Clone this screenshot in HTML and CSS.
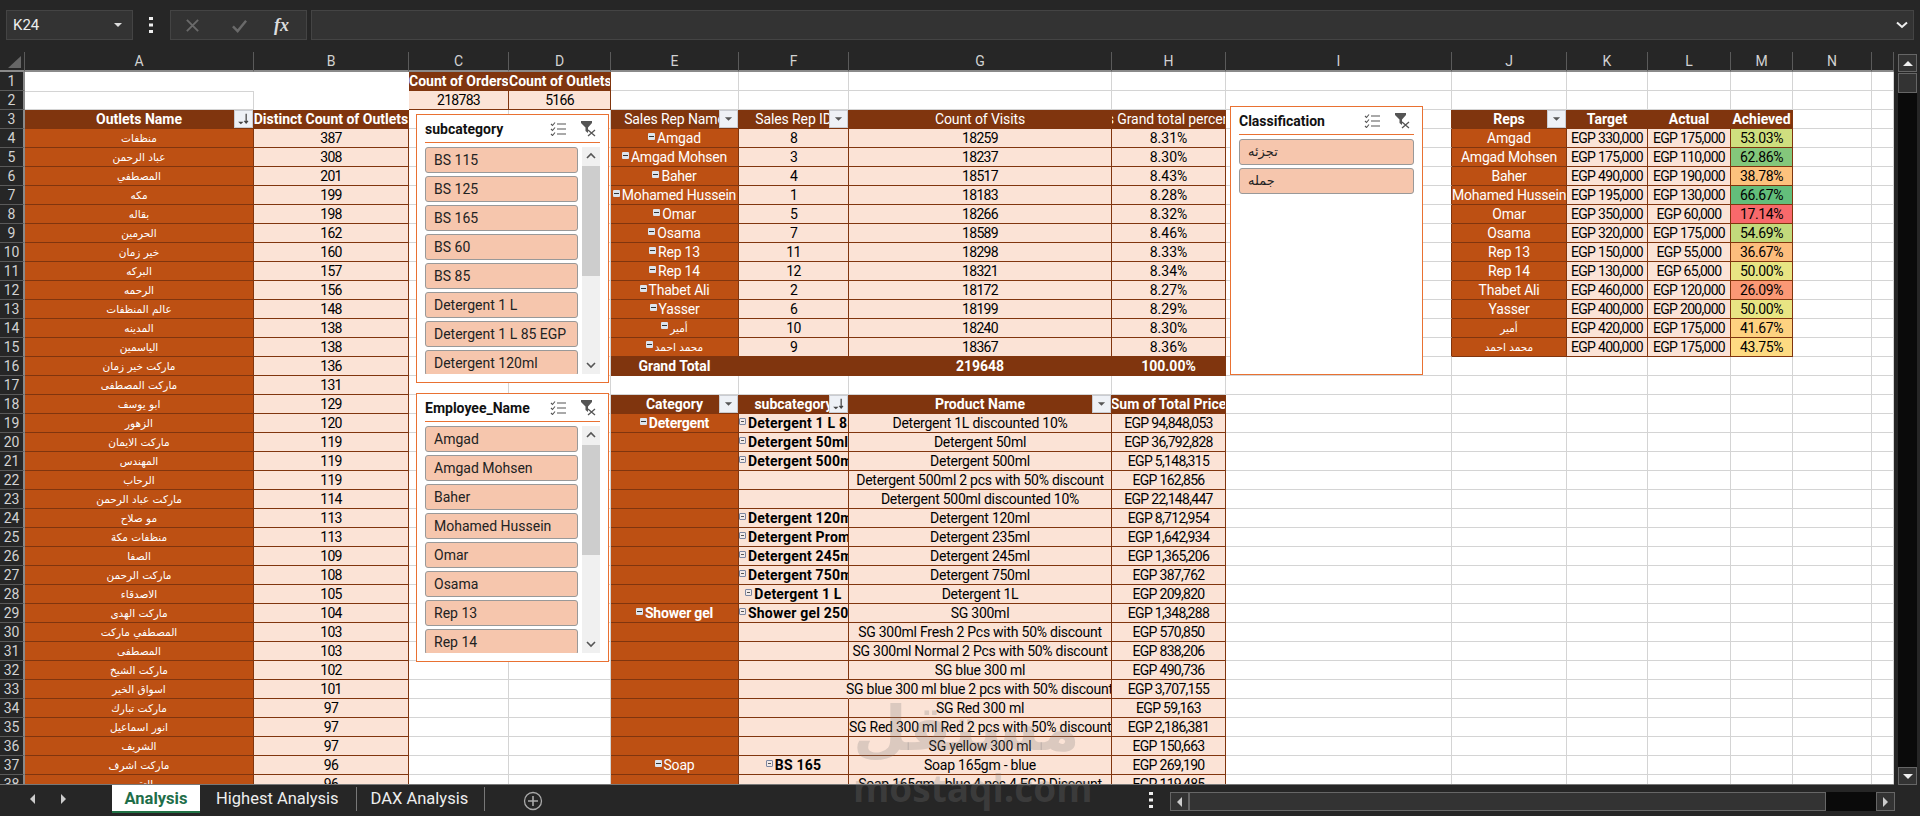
FILE: index.html
```html
<!DOCTYPE html>
<html lang="en">
<head>
<meta charset="utf-8">
<title>Analysis</title>
<link rel="stylesheet" href="styles.css">
</head>
<body>
<svg class="defs" width="0" height="0" aria-hidden="true">
  <symbol id="down" viewBox="0 0 18 18"><path d="M5 7h8l-4 4z" fill="#555"/></symbol>
  <symbol id="sort" viewBox="0 0 18 18"><path d="M3 12h6l-3 3z" fill="#444"/><path d="M12 3v10M10 11l2 2.5 2-2.5" stroke="#444" stroke-width="1.4" fill="none"/></symbol>
  <symbol id="check" viewBox="0 0 16 14"><path d="M1 2l1.5 1.5L5 .5M1 7l1.5 1.5L5 5.5M1 12l1.5 1.5L5 10.5" fill="none" stroke="#555" stroke-width="1.1"/><path d="M7 2h9M7 7h9M7 12h9" stroke="#555" stroke-width="1.1"/></symbol>
  <symbol id="clear" viewBox="0 0 16 16"><path d="M0 0h11v2L7 6.5V12L4.5 10V6.5L0 2z" fill="#555"/><path d="M7 9l7 6M14 9l-7 6" stroke="#555" stroke-width="1.3"/></symbol>
  <symbol id="up" viewBox="0 0 18 18"><path d="M5 11l4-4 4 4" fill="none" stroke="#555" stroke-width="1.6"/></symbol>
  <symbol id="dn" viewBox="0 0 18 18"><path d="M5 7l4 4 4-4" fill="none" stroke="#555" stroke-width="1.6"/></symbol>
  <symbol id="dots" viewBox="0 0 4 16"><path d="M0 0h4v3H0zM0 6.500h4v3H0zM0 13h4v3H0z" fill="#eee"/></symbol>
</svg>

<header class="formula">
  <div class="namebox"><span>K24</span><i class="tri"></i></div>
  <svg class="dots"><use href="#dots"/></svg>
  <div class="fxbox">
    <svg class="fxic" viewBox="0 0 16 16"><path d="M2 2l12 12M14 2L2 14" stroke="#6a6a6a" stroke-width="2"/></svg>
    <svg class="fxic" viewBox="0 0 16 16"><path d="M1 9l5 5L15 3" fill="none" stroke="#6a6a6a" stroke-width="2.600"/></svg>
    <span class="fx">fx</span>
  </div>
  <div class="input"><svg class="chev" viewBox="0 0 12 8"><path d="M1 1.500l5 4.500 5-4.500" fill="none" stroke="#eee" stroke-width="2"/></svg></div>
</header>

<main class="sheet">
  <div class="gridwrap">
    <table class="grid">
      <colgroup>
        <col class="c0"><col class="ca"><col class="cb"><col class="cc"><col class="cd"><col class="ce"><col class="cf"><col class="cg"><col class="ch"><col class="ci"><col class="cj"><col class="ck"><col class="cl"><col class="cm"><col class="cn"><col class="co">
      </colgroup>
      <thead>
        <tr><th class="corner"><i></i></th><th>A</th><th>B</th><th>C</th><th>D</th><th>E</th><th>F</th><th>G</th><th>H</th><th>I</th><th>J</th><th>K</th><th>L</th><th>M</th><th>N</th><th></th></tr>
      </thead>
      <tbody>
        <tr><th>1</th><td class="x"></td><td class="xb"></td><td class="h">Count of Orders</td><td class="h">Count of Outlets</td><td></td><td></td><td></td><td></td><td></td><td></td><td></td><td></td><td></td><td></td><td></td></tr>
        <tr><th>2</th><td class="a2"></td><td class="xb"></td><td class="l n">218783</td><td class="l n">5166</td><td></td><td></td><td></td><td></td><td></td><td></td><td></td><td></td><td></td><td></td><td></td></tr>
        <tr><th>3</th><td class="h rel">Outlets Name<span class="fb"><svg><use href="#sort"/></svg></span></td><td class="h"><span class="wide">Distinct Count of Outlets</span></td><td></td><td></td><td class="h reg rel"><span class="wide">Sales Rep Name</span><span class="fb"><svg><use href="#down"/></svg></span></td><td class="h reg rel">Sales Rep ID<span class="fb"><svg><use href="#down"/></svg></span></td><td class="h reg">Count of Visits</td><td class="h reg"><span class="wide">Visits Grand total percentage</span></td><td class="ib"></td><td class="h rel">Reps<span class="fb"><svg><use href="#down"/></svg></span></td><td class="h">Target</td><td class="h">Actual</td><td class="h">Achieved</td><td></td><td></td></tr>
        <tr><th>4</th><td class="o ar">منظفات</td><td class="l n">387</td><td></td><td></td><td class="o"><i class="m"></i>Amgad</td><td class="l n">8</td><td class="l n">18259</td><td class="l">8.31%</td><td class="ib"></td><td class="o">Amgad</td><td class="l n">EGP 330,000</td><td class="l n">EGP 175,000</td><td class="l p s1">53.03%</td><td></td><td></td></tr>
        <tr><th>5</th><td class="o ar">عباد الرحمن</td><td class="l n">308</td><td></td><td></td><td class="o"><i class="m"></i>Amgad Mohsen</td><td class="l n">3</td><td class="l n">18237</td><td class="l">8.30%</td><td class="ib"></td><td class="o">Amgad Mohsen</td><td class="l n">EGP 175,000</td><td class="l n">EGP 110,000</td><td class="l p s2">62.86%</td><td></td><td></td></tr>
        <tr><th>6</th><td class="o ar">المصطفي</td><td class="l n">201</td><td></td><td></td><td class="o"><i class="m"></i>Baher</td><td class="l n">4</td><td class="l n">18517</td><td class="l">8.43%</td><td class="ib"></td><td class="o">Baher</td><td class="l n">EGP 490,000</td><td class="l n">EGP 190,000</td><td class="l p s3">38.78%</td><td></td><td></td></tr>
        <tr><th>7</th><td class="o ar">مكه</td><td class="l n">199</td><td></td><td></td><td class="o"><i class="m"></i>Mohamed Hussein</td><td class="l n">1</td><td class="l n">18183</td><td class="l">8.28%</td><td class="ib"></td><td class="o">Mohamed Hussein</td><td class="l n">EGP 195,000</td><td class="l n">EGP 130,000</td><td class="l p s4">66.67%</td><td></td><td></td></tr>
        <tr><th>8</th><td class="o ar">بقاله</td><td class="l n">198</td><td></td><td></td><td class="o"><i class="m"></i>Omar</td><td class="l n">5</td><td class="l n">18266</td><td class="l">8.32%</td><td class="ib"></td><td class="o">Omar</td><td class="l n">EGP 350,000</td><td class="l n">EGP 60,000</td><td class="l p s5">17.14%</td><td></td><td></td></tr>
        <tr><th>9</th><td class="o ar">الحرمين</td><td class="l n">162</td><td></td><td></td><td class="o"><i class="m"></i>Osama</td><td class="l n">7</td><td class="l n">18589</td><td class="l">8.46%</td><td class="ib"></td><td class="o">Osama</td><td class="l n">EGP 320,000</td><td class="l n">EGP 175,000</td><td class="l p s6">54.69%</td><td></td><td></td></tr>
        <tr><th>10</th><td class="o ar">خير زمان</td><td class="l n">160</td><td></td><td></td><td class="o"><i class="m"></i>Rep 13</td><td class="l n">11</td><td class="l n">18298</td><td class="l">8.33%</td><td class="ib"></td><td class="o">Rep 13</td><td class="l n">EGP 150,000</td><td class="l n">EGP 55,000</td><td class="l p s7">36.67%</td><td></td><td></td></tr>
        <tr><th>11</th><td class="o ar">البركه</td><td class="l n">157</td><td></td><td></td><td class="o"><i class="m"></i>Rep 14</td><td class="l n">12</td><td class="l n">18321</td><td class="l">8.34%</td><td class="ib"></td><td class="o">Rep 14</td><td class="l n">EGP 130,000</td><td class="l n">EGP 65,000</td><td class="l p s8">50.00%</td><td></td><td></td></tr>
        <tr><th>12</th><td class="o ar">الرحمه</td><td class="l n">156</td><td></td><td></td><td class="o"><i class="m"></i>Thabet Ali</td><td class="l n">2</td><td class="l n">18172</td><td class="l">8.27%</td><td class="ib"></td><td class="o">Thabet Ali</td><td class="l n">EGP 460,000</td><td class="l n">EGP 120,000</td><td class="l p s9">26.09%</td><td></td><td></td></tr>
        <tr><th>13</th><td class="o ar">عالم المنظفات</td><td class="l n">148</td><td></td><td></td><td class="o"><i class="m"></i>Yasser</td><td class="l n">6</td><td class="l n">18199</td><td class="l">8.29%</td><td class="ib"></td><td class="o">Yasser</td><td class="l n">EGP 400,000</td><td class="l n">EGP 200,000</td><td class="l p s8">50.00%</td><td></td><td></td></tr>
        <tr><th>14</th><td class="o ar">المدينه</td><td class="l n">138</td><td></td><td></td><td class="o ar"><i class="m"></i>أمير</td><td class="l n">10</td><td class="l n">18240</td><td class="l">8.30%</td><td class="ib"></td><td class="o ar">أمير</td><td class="l n">EGP 420,000</td><td class="l n">EGP 175,000</td><td class="l p s10">41.67%</td><td></td><td></td></tr>
        <tr><th>15</th><td class="o ar">الياسمين</td><td class="l n">138</td><td></td><td></td><td class="o ar"><i class="m"></i>محمد احمد</td><td class="l n">9</td><td class="l n">18367</td><td class="l">8.36%</td><td class="ib"></td><td class="o ar">محمد احمد</td><td class="l n">EGP 400,000</td><td class="l n">EGP 175,000</td><td class="l p s11">43.75%</td><td></td><td></td></tr>
        <tr><th>16</th><td class="o ar">ماركت خير زمان</td><td class="l n">136</td><td></td><td></td><td class="h gt">Grand Total</td><td class="h gt"></td><td class="h gt">219648</td><td class="h gt">100.00%</td><td></td><td></td><td></td><td></td><td></td><td></td><td></td></tr>
        <tr><th>17</th><td class="o ar">ماركت المصطفى</td><td class="l n">131</td><td></td><td></td><td></td><td></td><td></td><td></td><td></td><td></td><td></td><td></td><td></td><td></td><td></td></tr>
        <tr><th>18</th><td class="o ar">ابو يوسف</td><td class="l n">129</td><td></td><td></td><td class="h rel">Category<span class="fb"><svg><use href="#down"/></svg></span></td><td class="h rel">subcategory<span class="fb"><svg><use href="#sort"/></svg></span></td><td class="h rel">Product Name<span class="fb"><svg><use href="#down"/></svg></span></td><td class="h"><span class="wide">Sum of Total Price</span></td><td></td><td></td><td></td><td></td><td></td><td></td><td></td></tr>
        <tr><th>19</th><td class="o ar">الزهور</td><td class="l n">120</td><td></td><td></td><td class="o bd"><i class="m"></i>Detergent</td><td class="l bd"><i class="m o2"></i>Detergent 1 L 85 EGP</td><td class="l t">Detergent 1L discounted 10%</td><td class="l n">EGP 94,848,053</td><td></td><td></td><td></td><td></td><td></td><td></td><td></td></tr>
        <tr><th>20</th><td class="o ar">ماركت الايمان</td><td class="l n">119</td><td></td><td></td><td class="o"></td><td class="l bd"><i class="m o2"></i>Detergent 50ml</td><td class="l t">Detergent 50ml</td><td class="l n">EGP 36,792,828</td><td></td><td></td><td></td><td></td><td></td><td></td><td></td></tr>
        <tr><th>21</th><td class="o ar">المهندس</td><td class="l n">119</td><td></td><td></td><td class="o"></td><td class="l bd"><i class="m o2"></i>Detergent 500ml</td><td class="l t">Detergent 500ml</td><td class="l n">EGP 5,148,315</td><td></td><td></td><td></td><td></td><td></td><td></td><td></td></tr>
        <tr><th>22</th><td class="o ar">الرحاب</td><td class="l n">119</td><td></td><td></td><td class="o"></td><td class="l"></td><td class="l t">Detergent 500ml 2 pcs with 50% discount</td><td class="l n">EGP 162,856</td><td></td><td></td><td></td><td></td><td></td><td></td><td></td></tr>
        <tr><th>23</th><td class="o ar">ماركت عباد الرحمن</td><td class="l n">114</td><td></td><td></td><td class="o"></td><td class="l"></td><td class="l t">Detergent 500ml discounted 10%</td><td class="l n">EGP 22,148,447</td><td></td><td></td><td></td><td></td><td></td><td></td><td></td></tr>
        <tr><th>24</th><td class="o ar">مو صلاح</td><td class="l n">113</td><td></td><td></td><td class="o"></td><td class="l bd"><i class="m o2"></i>Detergent 120ml</td><td class="l t">Detergent 120ml</td><td class="l n">EGP 8,712,954</td><td></td><td></td><td></td><td></td><td></td><td></td><td></td></tr>
        <tr><th>25</th><td class="o ar">منظفات مكة</td><td class="l n">113</td><td></td><td></td><td class="o"></td><td class="l bd"><i class="m o2"></i>Detergent Promo</td><td class="l t">Detergent 235ml</td><td class="l n">EGP 1,642,934</td><td></td><td></td><td></td><td></td><td></td><td></td><td></td></tr>
        <tr><th>26</th><td class="o ar">الصفا</td><td class="l n">109</td><td></td><td></td><td class="o"></td><td class="l bd"><i class="m o2"></i>Detergent 245ml</td><td class="l t">Detergent 245ml</td><td class="l n">EGP 1,365,206</td><td></td><td></td><td></td><td></td><td></td><td></td><td></td></tr>
        <tr><th>27</th><td class="o ar">ماركت الرحمن</td><td class="l n">108</td><td></td><td></td><td class="o"></td><td class="l bd"><i class="m o2"></i>Detergent 750ml</td><td class="l t">Detergent 750ml</td><td class="l n">EGP 387,762</td><td></td><td></td><td></td><td></td><td></td><td></td><td></td></tr>
        <tr><th>28</th><td class="o ar">الاصدقاء</td><td class="l n">105</td><td></td><td></td><td class="o"></td><td class="l bd"><i class="m o2"></i>Detergent 1 L</td><td class="l t">Detergent 1L</td><td class="l n">EGP 209,820</td><td></td><td></td><td></td><td></td><td></td><td></td><td></td></tr>
        <tr><th>29</th><td class="o ar">ماركت الهدى</td><td class="l n">104</td><td></td><td></td><td class="o bd"><i class="m"></i>Shower gel</td><td class="l bd"><i class="m o2"></i>Shower gel 250ml</td><td class="l t">SG 300ml</td><td class="l n">EGP 1,348,288</td><td></td><td></td><td></td><td></td><td></td><td></td><td></td></tr>
        <tr><th>30</th><td class="o ar">المصطفي ماركت</td><td class="l n">103</td><td></td><td></td><td class="o"></td><td class="l"></td><td class="l t">SG 300ml Fresh 2 Pcs with 50% discount</td><td class="l n">EGP 570,850</td><td></td><td></td><td></td><td></td><td></td><td></td><td></td></tr>
        <tr><th>31</th><td class="o ar">المصطفى</td><td class="l n">103</td><td></td><td></td><td class="o"></td><td class="l"></td><td class="l t">SG 300ml Normal 2 Pcs with 50% discount</td><td class="l n">EGP 838,206</td><td></td><td></td><td></td><td></td><td></td><td></td><td></td></tr>
        <tr><th>32</th><td class="o ar">ماركت الشيخ</td><td class="l n">102</td><td></td><td></td><td class="o"></td><td class="l"></td><td class="l t">SG blue 300 ml</td><td class="l n">EGP 490,736</td><td></td><td></td><td></td><td></td><td></td><td></td><td></td></tr>
        <tr><th>33</th><td class="o ar">اسواق الخير</td><td class="l n">101</td><td></td><td></td><td class="o"></td><td class="l nr"></td><td class="l t spill"><span>SG blue 300 ml blue 2 pcs with 50% discount</span></td><td class="l n">EGP 3,707,155</td><td></td><td></td><td></td><td></td><td></td><td></td><td></td></tr>
        <tr><th>34</th><td class="o ar">ماركت تبارك</td><td class="l n">97</td><td></td><td></td><td class="o"></td><td class="l"></td><td class="l t">SG Red 300 ml</td><td class="l n">EGP 59,163</td><td></td><td></td><td></td><td></td><td></td><td></td><td></td></tr>
        <tr><th>35</th><td class="o ar">انور اسماعيل</td><td class="l n">97</td><td></td><td></td><td class="o"></td><td class="l"></td><td class="l t">SG Red 300 ml Red 2 pcs with 50% discount</td><td class="l n">EGP 2,186,381</td><td></td><td></td><td></td><td></td><td></td><td></td><td></td></tr>
        <tr><th>36</th><td class="o ar">الشريف</td><td class="l n">97</td><td></td><td></td><td class="o"></td><td class="l"></td><td class="l t">SG yellow 300 ml</td><td class="l n">EGP 150,663</td><td></td><td></td><td></td><td></td><td></td><td></td><td></td></tr>
        <tr><th>37</th><td class="o ar">ماركت اشرف</td><td class="l n">96</td><td></td><td></td><td class="o"><i class="m"></i>Soap</td><td class="l bd"><i class="m o2"></i>BS 165</td><td class="l t">Soap 165gm - blue</td><td class="l n">EGP 269,190</td><td></td><td></td><td></td><td></td><td></td><td></td><td></td></tr>
        <tr><th>38</th><td class="o ar">التقوى</td><td class="l n">96</td><td></td><td></td><td class="o"></td><td class="l"></td><td class="l t">Soap 165gm - blue 4 pcs 4 EGP Discount</td><td class="l n">EGP 119,485</td><td></td><td></td><td></td><td></td><td></td><td></td><td></td></tr>
      </tbody>
    </table>

    <section class="slicer s-sub">
      <div class="sl-head"><b>subcategory</b><svg class="ic1"><use href="#check"/></svg><svg class="ic2"><use href="#clear"/></svg></div>
      <div class="sl-body">
        <div class="sl-list">
          <div class="btn">BS 115</div><div class="btn">BS 125</div><div class="btn">BS 165</div><div class="btn">BS 60</div><div class="btn">BS 85</div><div class="btn">Detergent 1 L</div><div class="btn">Detergent 1 L 85 EGP</div><div class="btn">Detergent 120ml</div>
        </div>
        <div class="sb"><svg><use href="#up"/></svg><i class="thumb"></i><svg class="sb-dn"><use href="#dn"/></svg></div>
      </div>
    </section>

    <section class="slicer s-emp">
      <div class="sl-head"><b>Employee_Name</b><svg class="ic1"><use href="#check"/></svg><svg class="ic2"><use href="#clear"/></svg></div>
      <div class="sl-body">
        <div class="sl-list">
          <div class="btn">Amgad</div><div class="btn">Amgad Mohsen</div><div class="btn">Baher</div><div class="btn">Mohamed Hussein</div><div class="btn">Omar</div><div class="btn">Osama</div><div class="btn">Rep 13</div><div class="btn">Rep 14</div>
        </div>
        <div class="sb"><svg><use href="#up"/></svg><i class="thumb"></i><svg class="sb-dn"><use href="#dn"/></svg></div>
      </div>
    </section>

    <section class="slicer s-cls">
      <div class="sl-head"><b>Classification</b><svg class="ic1"><use href="#check"/></svg><svg class="ic2"><use href="#clear"/></svg></div>
      <div class="sl-body">
        <div class="sl-list">
          <div class="btn ar">تجزئه</div><div class="btn ar">جمله</div>
        </div>
      </div>
    </section>
  </div>

  <aside class="vscroll">
    <div class="vbtn"><i class="t-up"></i></div>
    <div class="vthumb"></div>
    <div class="vtrack"></div>
    <div class="vbtn"><i class="t-dn"></i></div>
  </aside>
</main>

<footer class="tabs">
  <div class="nav"><i class="t-l"></i><i class="t-r"></i></div>
  <div class="tab active">Analysis</div>
  <div class="tab">Highest Analysis</div>
  <i class="sep s1st"></i>
  <div class="tab">DAX Analysis</div>
  <i class="sep"></i>
  <svg class="plus" viewBox="0 0 20 20"><circle cx="10" cy="10" r="8.500" fill="none" stroke="#aaa" stroke-width="1.300"/><path d="M5 10h10M10 5v10" stroke="#aaa" stroke-width="1.600"/></svg>
  <svg class="dots dots2"><use href="#dots"/></svg>
  <div class="hscroll">
    <div class="hbtn"><i class="t-l"></i></div>
    <div class="hthumb"></div>
    <div class="htrack"></div>
    <div class="hbtn"><i class="t-r"></i></div>
  </div>
</footer>

<div class="wm">
  <div class="wm-ar">مستقل</div>
  <div class="wm-en">mostaql.com</div>
</div>
</body>
</html>
```

FILE: styles.css
```css
* { box-sizing: border-box; }
html, body { margin: 0; padding: 0; }
body {
  width: 1920px; height: 816px; overflow: hidden; background: #262626;
  display: flex; flex-direction: column; position: relative;
  font-family: Roboto, "DejaVu Sans", sans-serif; font-size: 14px; color: #000;
}
.defs { position: absolute; }

/* formula bar */
.formula { height: 52px; flex: none; display: flex; padding: 10px 6px 12px 6px; align-items: stretch; }
.namebox { width: 127px; background: #333; border: 1px solid #444; color: #eee; font-size: 15px; display: flex; align-items: center; padding: 0 6px; justify-content: space-between; }
.tri { width: 0; height: 0; border: 4px solid transparent; border-top: 4px solid #ddd; border-bottom: 0; margin-right: 4px; }
.dots { width: 4px; height: 16px; align-self: center; margin: 0 17px 0 16px; }
.fxbox { width: 137px; background: #333; border: 1px solid #444; display: flex; align-items: center; padding-left: 14px; gap: 32px; }
.fxic { width: 15px; height: 15px; flex: none; }
.fx { font: italic bold 18px "Liberation Serif", serif; color: #ddd; margin-left: -5px; }
.input { flex: 1; margin-left: 4px; margin-right: 0; background: #333; border: 1px solid #444; display: flex; align-items: center; justify-content: flex-end; padding-right: 5px; }
.chev { width: 12px; height: 8px; }

/* sheet */
.sheet { flex: none; height: 733px; display: flex; }
.gridwrap { width: 1894px; height: 733px; overflow: hidden; position: relative; background: #fff; border-bottom: 1px solid #777; }
.grid { width: 1894px; table-layout: fixed; border-collapse: separate; border-spacing: 0; background: #fff; }
.c0 { width: 25px; } .ca { width: 229px; } .cb { width: 155px; } .cc { width: 100px; } .cd { width: 102px; }
.ce { width: 128px; } .cf { width: 110px; } .cg { width: 263px; } .ch { width: 114px; } .ci { width: 226px; }
.cj { width: 115px; } .ck { width: 81px; } .cl { width: 83px; } .cm { width: 62px; } .cn { width: 79px; } .co { width: 22px; }
.grid tr { height: 19px; }
.grid th {
  background: #262626; color: #d2d2d2; font-weight: 400; font-size: 14px; padding: 0; height: 19px; line-height: 18px;
  border-right: 1px solid #5a5a5a; border-bottom: 1px solid #5a5a5a; overflow: hidden; text-align: center;
}
.grid thead th { border-bottom: 2px solid #8a8a8a; }
.grid tbody th { border-right: 2px solid #8a8a8a; }
.corner { position: relative; }
.corner i { position: absolute; right: 3px; bottom: 2px; width: 0; height: 0; border-left: 13px solid transparent; border-bottom: 12px solid #666; }
.grid td {
  padding: 0; height: 19px; line-height: 18px; text-align: center; white-space: nowrap; overflow: hidden;
  border-right: 1px solid #d4d4d4; border-bottom: 1px solid #d4d4d4; color: #000;
}
.grid td.x { border-color: #fff; }
.grid td.xb { border-color: #fff; }
.grid td.a2 { border-top: 1px solid #d4d4d4; }
.grid td.ib { border-right-color: #80350e; }
.grid td.h { background: #80350e; color: #fff; font-weight: 700; border-color: #80350e; }
.grid td.reg { font-weight: 400; letter-spacing: -.1px; }
.grid td.o { background: #bd5013; color: #fff; border-color: #80350e; letter-spacing: -.2px; }
.grid td.l { background: #fbe3d6; border-color: #80350e; }
.grid td.n { letter-spacing: -.7px; }
.grid td.t { letter-spacing: -.25px; }
.grid td.p { letter-spacing: -.4px; }
.grid td.bd { font-weight: 700; }
.grid td.l.bd { letter-spacing: .2px; }
.grid td.nr { border-right-color: #fbe3d6; }
.grid td.spill { overflow: visible; text-align: left; }
.spill span { display: block; margin-left: -3px; overflow: hidden; }
.ar { font-family: "DejaVu Sans", sans-serif; font-size: 10.500px; }
.rel { position: relative; }
.wide { display: block; margin: 0 -70px; }
.fb { position: absolute; right: 0; top: 0; width: 19px; height: 18px; background: #eef1f6; border: 1px solid #c9ccd2; display: block; }
.fb svg { width: 17px; height: 16px; display: block; }
.m { display: inline-block; width: 7px; height: 7px; margin-right: 2px; vertical-align: 3px; background: #dce3ec; position: relative; border-radius: 1px; }
.m::after { content: ""; position: absolute; left: 1px; right: 1px; top: 3px; height: 1px; background: #333; }
.m.o2 { background: #f3eae8; border: 1px solid #7c86a0; }
.m.o2::after { top: 2px; left: 1px; right: 1px; background: #555; }
.s1 { background: #cfdf7f !important; } .s2 { background: #84c77b !important; } .s3 { background: #fdc27d !important; }
.s4 { background: #63be7b !important; } .s5 { background: #f8696b !important; } .s6 { background: #c2da7c !important; }
.s7 { background: #fdbd7d !important; } .s8 { background: #e8e583 !important; } .s9 { background: #fb9875 !important; }
.s10 { background: #fed280 !important; } .s11 { background: #fedb82 !important; }

/* slicers */
.slicer { position: absolute; background: #fff; border: 1px solid #e97132; padding: 0 8px 8px 8px; display: flex; flex-direction: column; width: 193px; height: 269px; }
.s-sub { left: 416px; top: 62px; }
.s-emp { left: 416px; top: 341px; }
.s-cls { left: 1230px; top: 54px; }
.sl-head { flex: none; height: 28px; border-bottom: 1px solid #e97132; display: flex; align-items: center; font-size: 14px; }
.sl-head b { flex: 1; color: #111; }
.ic1 { width: 16px; height: 14px; margin-right: 15px; }
.ic2 { width: 16px; height: 16px; margin-right: 3px; }
.sl-body { flex: 1; min-height: 0; display: flex; gap: 4px; margin-top: 4px; }
.sl-list { flex: 1; min-width: 0; overflow: hidden; display: flex; flex-direction: column; gap: 3px; }
.btn { flex: none; height: 26px; background: #f6c6ad; border: 1px solid #999; border-radius: 3px; padding-left: 8px; line-height: 24px; font-size: 14px; color: #222; }
.btn.ar { font-size: 13px; }
.sb { flex: none; width: 18px; background: #f0f0f0; display: flex; flex-direction: column; }
.sb svg { width: 18px; height: 18px; flex: none; }
.thumb { display: block; height: 110px; background: #cdcdcd; margin-top: 1px; }
.sb-dn { margin-top: auto; }

/* v scrollbar */
.vscroll { flex: none; width: 19px; margin-left: 4px; display: flex; flex-direction: column; padding-top: 2px; }
.vbtn { flex: none; height: 18px; border: 1px solid #666; background: #333; display: flex; align-items: center; justify-content: center; }
.vthumb { flex: none; height: 20px; margin-top: 1px; border: 1px solid #666; background: #333; }
.vtrack { flex: 1; background: #0a0a0a; }
.t-up { border: 5px solid transparent; border-bottom: 5px solid #eee; border-top: 0; width: 0; height: 0; }
.t-dn { border: 5px solid transparent; border-top: 5px solid #eee; border-bottom: 0; width: 0; height: 0; }
.t-l { border: 5px solid transparent; border-right: 5px solid #ccc; border-left: 0; width: 0; height: 0; display: block; }
.t-r { border: 5px solid transparent; border-left: 5px solid #ccc; border-right: 0; width: 0; height: 0; display: block; }

/* tabs */
.tabs { flex: 1; display: flex; align-items: flex-start; position: relative; }
.nav { width: 112px; height: 28px; display: flex; align-items: center; padding-left: 30px; gap: 26px; }
.tab { height: 28px; font-size: 16.500px; color: #eee; line-height: 27px; }
.tab.active { width: 88px; background: #fff; color: #1f6e4a; font-weight: 700; text-align: center; border-bottom: 2px solid #217346; margin-right: 16px; }
.sep { width: 1px; height: 24px; background: #777; margin: 2px 14px 0 16px; }
.s1st { margin-left: 17px; }
.plus { width: 20px; height: 20px; margin: 6px 0 0 24px; flex: none; }
.dots2 { position: absolute; left: 1149px; top: 7px; margin: 0; }
.hscroll { position: absolute; left: 1170px; top: 7px; width: 725px; height: 19px; display: flex; }
.hbtn { flex: none; width: 19px; border: 1px solid #666; background: #333; display: flex; align-items: center; justify-content: center; }
.hthumb { flex: none; width: 637px; border: 1px solid #666; background: #333; }
.htrack { flex: 1; background: #0a0a0a; }

/* watermark */
.wm { position: absolute; left: 853px; top: 688px; width: 212px; pointer-events: none; text-align: center; color: rgba(125,125,125,.25); }
.wm-ar { font: 700 62px/82px "DejaVu Sans", sans-serif; }
.wm-en { font: 700 37px/36px "Open Sans", sans-serif; margin-top: 0; }
```
